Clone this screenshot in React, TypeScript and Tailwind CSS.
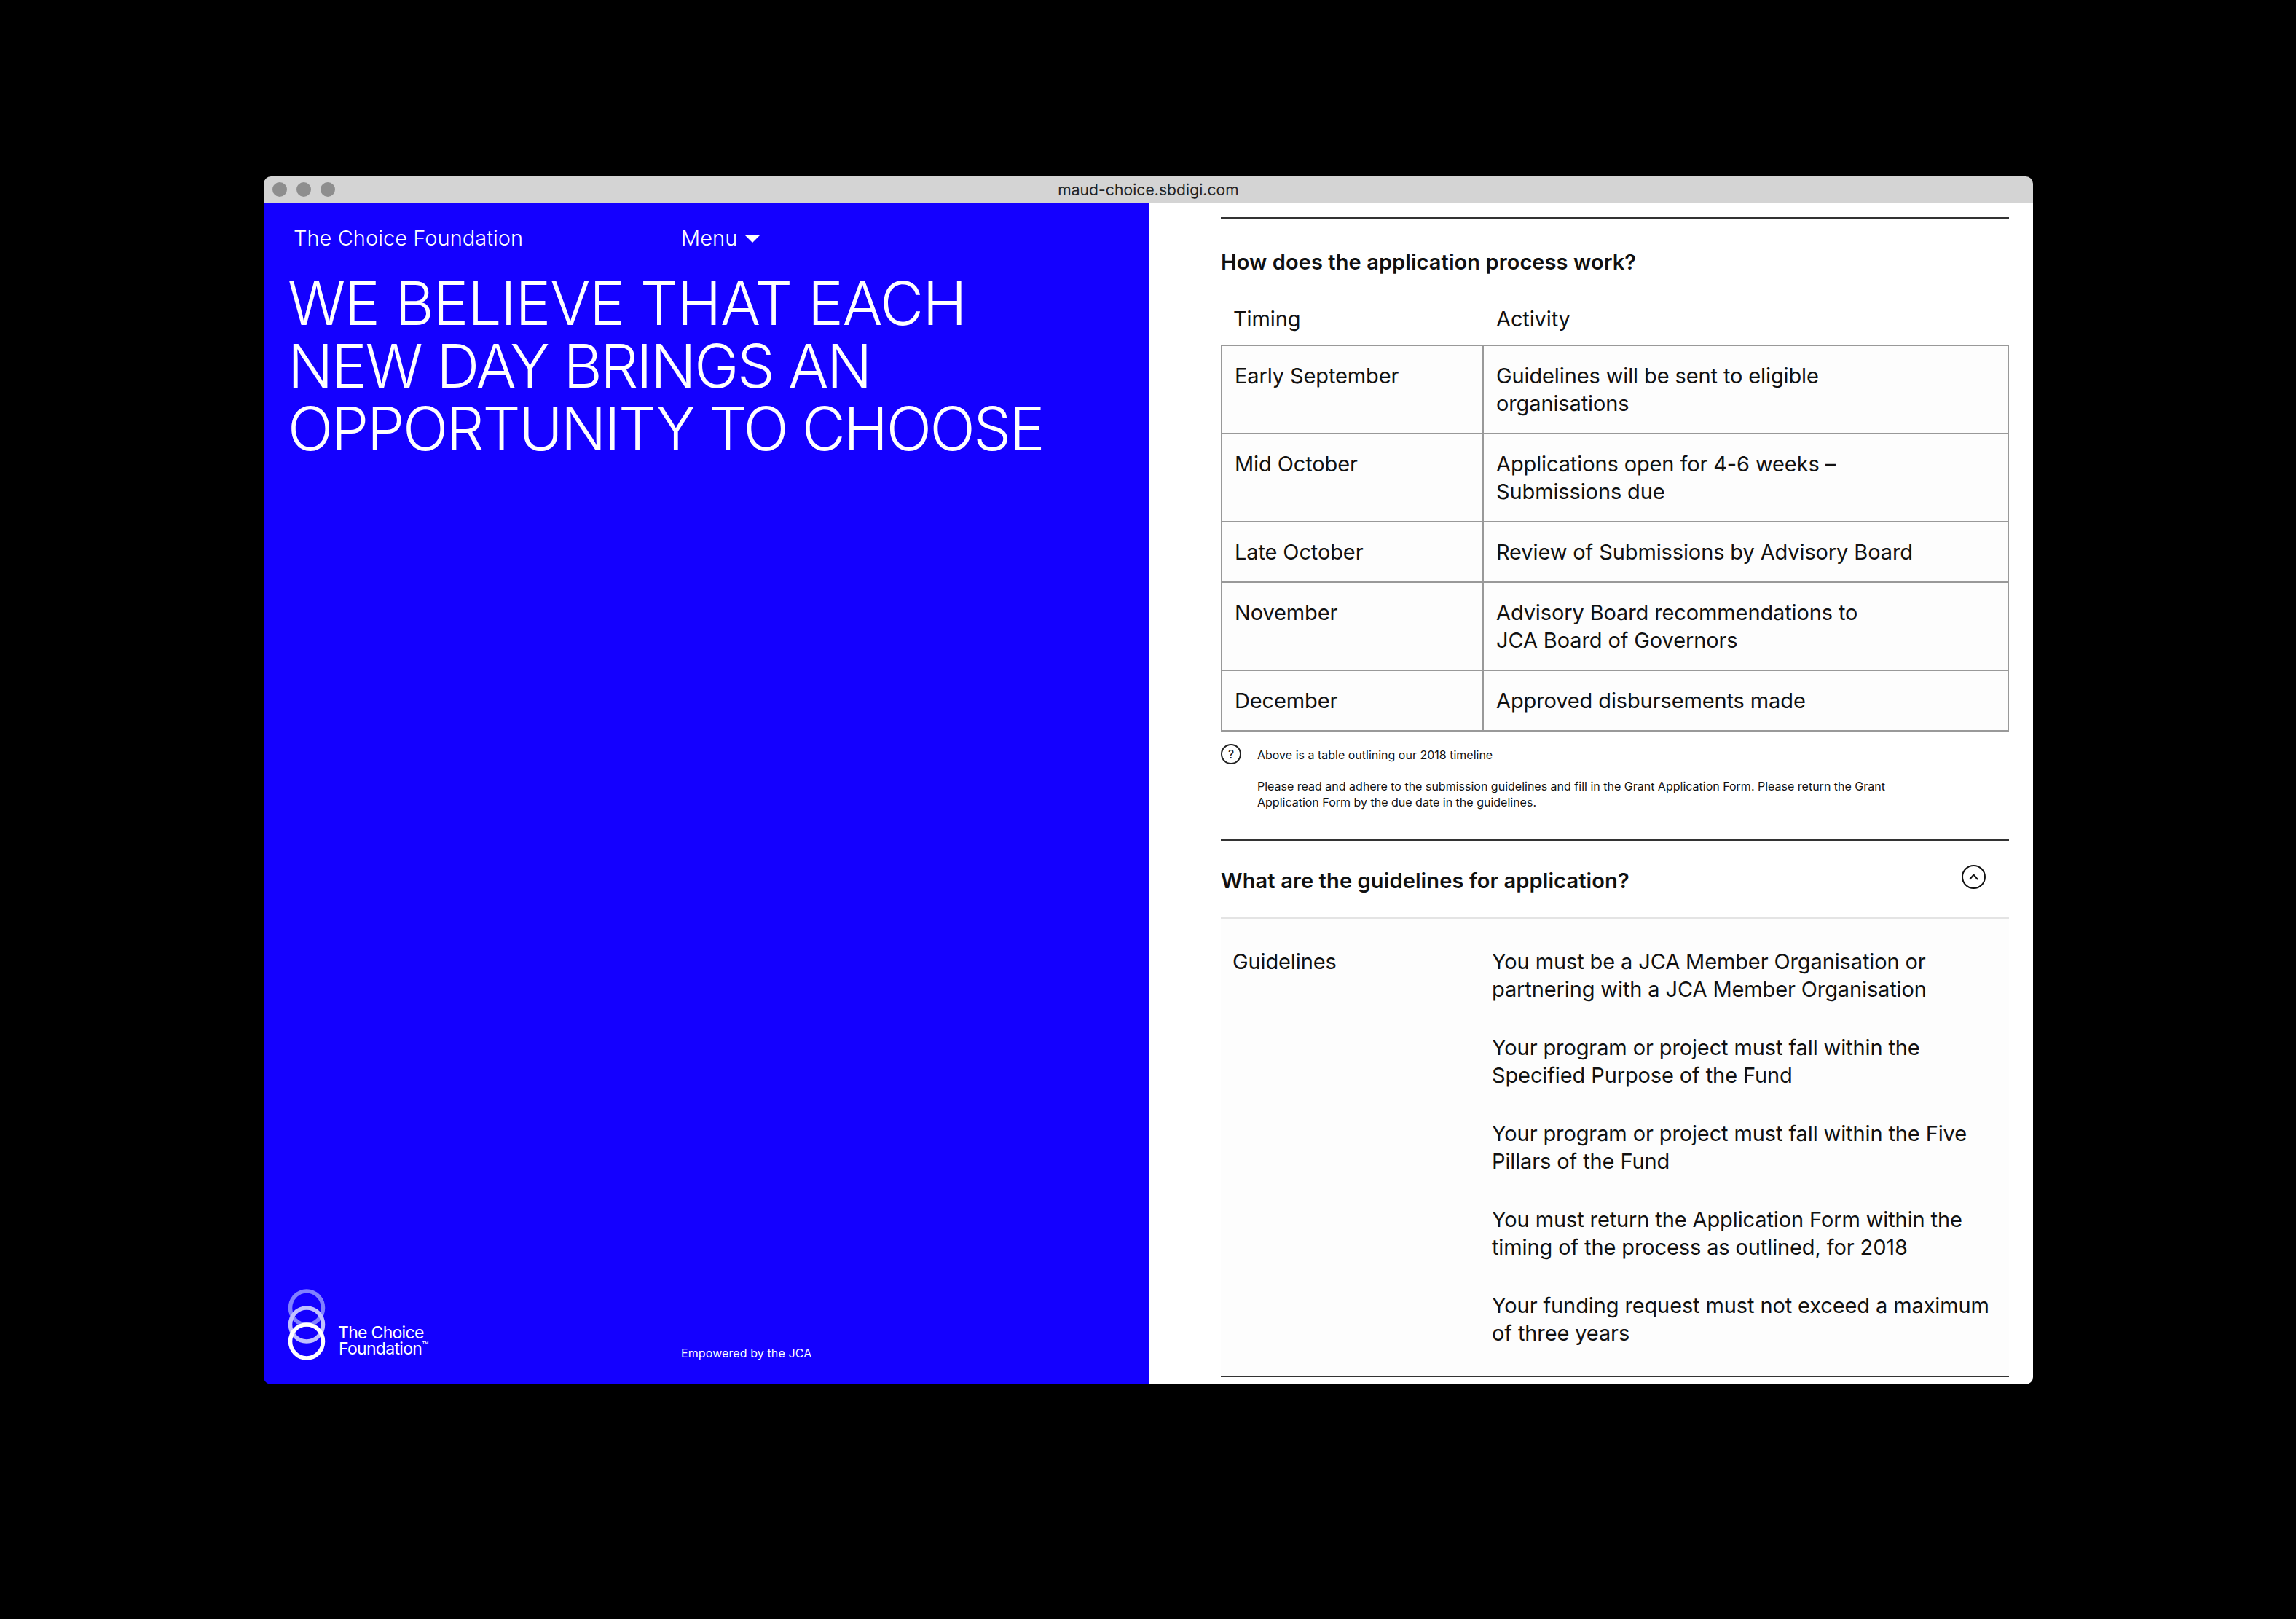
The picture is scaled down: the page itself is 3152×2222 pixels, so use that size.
const timeline = [
  { timing: 'Early September', lines: ['Guidelines will be sent to eligible', 'organisations'] },
  { timing: 'Mid October', lines: ['Applications open for 4-6 weeks –', 'Submissions due'] },
  { timing: 'Late October', lines: ['Review of Submissions by Advisory Board'] },
  { timing: 'November', lines: ['Advisory Board recommendations to', 'JCA Board of Governors'] },
  { timing: 'December', lines: ['Approved disbursements made'] },
];

const guidelines = [
  ['You must be a JCA Member Organisation or', 'partnering with a JCA Member Organisation'],
  ['Your program or project must fall within the', 'Specified Purpose of the Fund'],
  ['Your program or project must fall within the Five', 'Pillars of the Fund'],
  ['You must return the Application Form within the', 'timing of the process as outlined, for 2018'],
  ['Your funding request must not exceed a maximum', 'of three years'],
];

function Lines({ lines }: { lines: string[] }) {
  return (
    <>
      {lines.map((line) => (
        <div key={line} className="whitespace-nowrap">
          {line}
        </div>
      ))}
    </>
  );
}

function RingsLogo() {
  return (
    <svg width="52" height="98" viewBox="0 0 52 98" fill="none" className="shrink-0">
      <ellipse cx="26" cy="26" rx="22.5" ry="23" stroke="#8080ff" strokeWidth="5.5" />
      <ellipse cx="26" cy="49" rx="22.5" ry="23" stroke="#c0c0ff" strokeWidth="5.5" />
      <ellipse cx="26" cy="72" rx="22.5" ry="23" stroke="#ffffff" strokeWidth="5.5" />
    </svg>
  );
}

export default function App() {
  return (
    <div className="h-[2222px] w-[3152px] bg-black pl-[362px] pt-[242px] font-['Inter',sans-serif] text-[#111]">
      <div className="flex h-[1658px] w-[2429px] flex-col overflow-hidden rounded-[10px]">
        {/* Browser bar */}
        <div className="relative flex h-[37px] shrink-0 items-center justify-center bg-[#d4d4d4]">
          <div className="absolute left-[12px] top-[8px] flex gap-[13px]">
            <span className="h-[20px] w-[20px] rounded-full bg-[#8e8e8e]" />
            <span className="h-[20px] w-[20px] rounded-full bg-[#8e8e8e]" />
            <span className="h-[20px] w-[20px] rounded-full bg-[#8e8e8e]" />
          </div>
          <span className="text-[21px] leading-none tracking-[0.1px] text-[#222]">maud-choice.sbdigi.com</span>
        </div>

        <div className="flex min-h-0 flex-1">
          {/* Left panel */}
          <div className="flex w-[1215px] shrink-0 flex-col bg-[#1400ff] text-white">
            <div className="flex pl-[41px] pt-[29px] text-[29px] leading-[38px] tracking-[0.05px] font-light">
              <span className="w-[532px]">The Choice Foundation</span>
              <span className="flex items-center gap-[11px]">
                Menu
                <span className="mt-[2px] h-0 w-0 border-x-[10px] border-t-[10px] border-x-transparent border-t-white" />
              </span>
            </div>
            <h1 className="mt-[28px] whitespace-nowrap pl-[33px] text-[82px] leading-[86px] font-light">
              <span className="block tracking-[-1.2px]">WE BELIEVE THAT EACH</span>
              <span className="block tracking-[-2.3px]">NEW DAY BRINGS AN</span>
              <span className="block tracking-[-2.4px]">OPPORTUNITY TO CHOOSE</span>
            </h1>
            <div className="mt-auto flex items-end pb-[33px] pl-[33px]">
              <RingsLogo />
              <div className="ml-[17px] w-[471px] pb-[5px] text-[23px] leading-[22px] tracking-[-0.7px]">
                <div>The Choice</div>
                <div className="pl-[1px]">
                  Foundation<sup className="text-[15px] leading-none">™</sup>
                </div>
              </div>
              <span className="text-[16px] leading-[20px] tracking-[0.1px]">Empowered by the JCA</span>
            </div>
          </div>

          {/* Right panel */}
          <div className="flex-1 overflow-hidden bg-white pl-[99px] pr-[33px] pt-[19px] text-[29px] leading-[38px] tracking-[-0.12px]">
            <div className="h-[2px] bg-[#333]" />
            <h2 className="mt-[41px] text-[29px] font-semibold leading-[38px] tracking-[0.08px]">
              How does the application process work?
            </h2>
            <div className="mt-[40px] flex h-[38px] pl-[17px]">
              <span className="w-[361px]">Timing</span>
              <span>Activity</span>
            </div>
            <div className="mt-[16px] border-[2px] border-b-0 border-[#999] bg-[#fdfdfd]">
              {timeline.map((row) => (
                <div key={row.timing} className="grid grid-cols-[359px_1fr] border-b-[2px] border-[#999]">
                  <div className="border-r-[2px] border-[#999] pb-[21px] pl-[17px] pt-[22px]">{row.timing}</div>
                  <div className="pb-[21px] pl-[17px] pt-[22px]">
                    <Lines lines={row.lines} />
                  </div>
                </div>
              ))}
            </div>

            <div className="mt-[17px] flex text-[16px] leading-[22px] tracking-[0px]">
              <span className="flex h-[28px] w-[28px] shrink-0 items-center justify-center rounded-full border-[2px] border-[#222] text-[16px] leading-none">
                ?
              </span>
              <div className="ml-[22px] pt-[4px]">
                <div>Above is a table outlining our 2018 timeline</div>
                <div className="mt-[21px]">
                  Please read and adhere to the submission guidelines and fill in the Grant Application Form. Please return the Grant
                </div>
                <div>Application Form by the due date in the guidelines.</div>
              </div>
            </div>

            <div className="mt-[40px] h-[2px] bg-[#333]" />
            <div className="flex h-[107px] items-center justify-between border-b-[2px] border-[#e4e4e4] pr-[32px] pt-[4px]">
              <h2 className="font-semibold tracking-[0.12px]">What are the guidelines for application?</h2>
              <span className="mb-[10px] flex h-[33px] w-[33px] items-center justify-center rounded-full border-[2px] border-[#111]">
                <svg width="13" height="9" viewBox="0 0 13 9" fill="none">
                  <path d="M1 8L6.5 1.5L12 8" stroke="#111" strokeWidth="2" />
                </svg>
              </span>
            </div>
            <div className="grid grid-cols-[356px_1fr] bg-[#fdfdfd] pb-[39px] pl-[16px] pt-[40px]">
              <span>Guidelines</span>
              <div className="flex flex-col gap-[42px]">
                {guidelines.map((lines) => (
                  <div key={lines[0]}>
                    <Lines lines={lines} />
                  </div>
                ))}
              </div>
            </div>
            <div className="h-[2px] bg-[#333]" />
          </div>
        </div>
      </div>
    </div>
  );
}
